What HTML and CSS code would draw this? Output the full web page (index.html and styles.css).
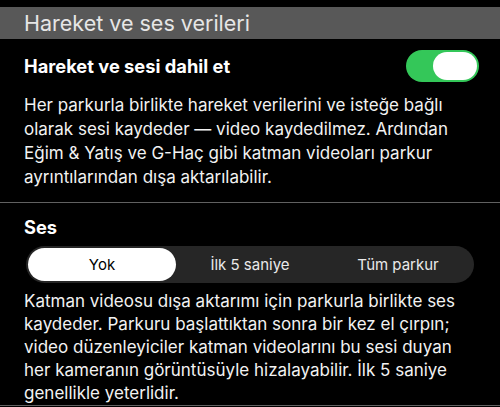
FILE: index.html
```html
<!DOCTYPE html>
<html lang="tr">
<head>
<meta charset="utf-8">
<link rel="stylesheet" href="styles.css">
</head>
<body>
<div class="header">Hareket ve ses verileri</div>
<section class="group">
  <div class="toggle-row">
    <span class="title">Hareket ve sesi dahil et</span>
    <span class="switch"><span class="knob"></span></span>
  </div>
  <p class="desc first">Her parkurla birlikte hareket verilerini ve isteğe bağlı olarak sesi kaydeder — video kaydedilmez. Ardından Eğim &amp; Yatış ve G-Haç gibi katman videoları parkur ayrıntılarından dışa aktarılabilir.</p>
</section>
<section class="group">
  <div class="title sub">Ses</div>
  <div class="segmented">
    <span class="seg selected">Yok</span>
    <span class="seg">İlk 5 saniye</span>
    <span class="seg">Tüm parkur</span>
  </div>
  <p class="desc second">Katman videosu dışa aktarımı için parkurla birlikte ses kaydeder. Parkuru başlattıktan sonra bir kez el çırpın; video düzenleyiciler katman videolarını bu sesi duyan her kameranın görüntüsüyle hizalayabilir. İlk 5 saniye genellikle yeterlidir.</p>
</section>
</body>
</html>
```
FILE: styles.css
```css
html, body {
  margin: 0;
  padding: 0;
  background: #000;
}
body {
  font-family: Inter, "Liberation Sans", sans-serif;
  color: #f2f2f2;
  width: 500px;
  height: 407px;
  overflow: hidden;
}
.header {
  margin-top: 7px;
  height: 32px;
  line-height: 32px;
  background: #585858;
  color: #e6e6e6;
  font-size: 21.5px;
  padding-left: 24px;
}
.group {
  border-bottom: 1px solid #616161;
}
.toggle-row {
  display: flex;
  align-items: center;
  justify-content: space-between;
  padding: 11px 21px 0 24px;
  height: 32px;
}
.title {
  font-weight: 700;
  font-size: 18.3px;
  color: #fff;
}
.switch {
  width: 73px;
  height: 32px;
  border-radius: 16px;
  background: #34c759;
  display: flex;
  align-items: center;
  justify-content: flex-end;
  padding-right: 2px;
  box-sizing: border-box;
}
.knob {
  width: 44px;
  height: 28px;
  border-radius: 14px;
  background: #fff;
}
.desc {
  margin: 0;
  font-size: 17px;
}
.desc.first {
  line-height: 24px;
  padding: 11px 20px 13px 24px;
}
.desc.second {
  line-height: 23px;
  padding: 7px 20px 0 24px;
}
.sub {
  padding: 13px 24px 0;
  line-height: 22px;
}
.segmented {
  margin: 8px 26px 0;
  height: 37px;
  border-radius: 18.5px;
  background: #262626;
  display: grid;
  grid-template-columns: 1fr 1fr 1fr;
  padding: 2px;
  box-sizing: border-box;
}
.seg {
  display: flex;
  align-items: center;
  justify-content: center;
  font-size: 15px;
  color: #eaeaea;
  border-radius: 17px;
}
.seg.selected {
  background: #fff;
  color: #000;
}
```
